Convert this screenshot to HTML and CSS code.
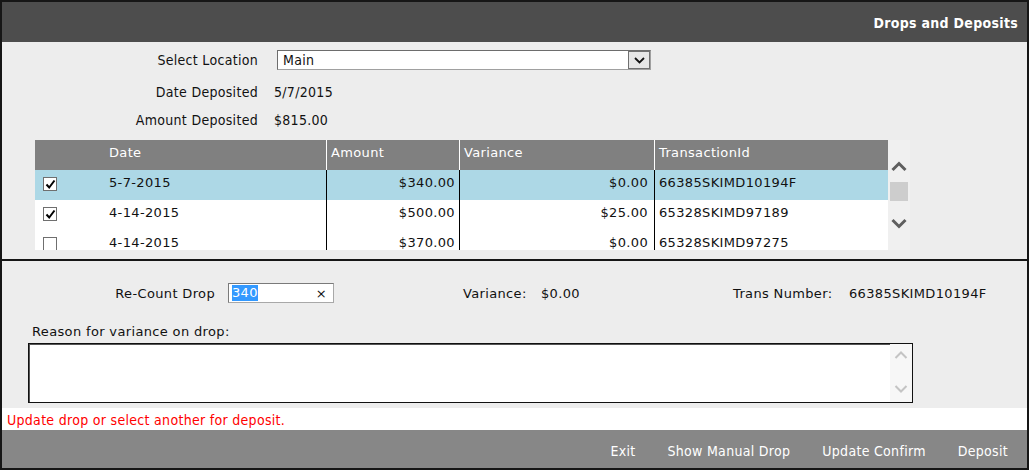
FILE: index.html
```html
<!DOCTYPE html>
<html>
<head>
<meta charset="utf-8">
<link rel="stylesheet" href="styles.css">
</head>
<body>
<div class="app">
  <header class="titlebar"><h1 class="title">Drops and Deposits</h1></header>
  <section class="top">
    <div class="form-grid">
      <div class="lbl">Select Location</div>
      <div class="select"><span class="select-text">Main</span><span class="select-btn"><svg width="11" height="7" viewBox="0 0 11 7"><path d="M1 1 L5.5 5.5 L10 1" fill="none" stroke="#111" stroke-width="1.8"/></svg></span></div>
      <div class="lbl">Date Deposited</div>
      <div class="val">5/7/2015</div>
      <div class="lbl">Amount Deposited</div>
      <div class="val">$815.00</div>
    </div>
    <div class="grid-wrap">
      <div class="grid">
        <div class="grow ghead">
          <div class="c c-chk"></div>
          <div class="c c-date">Date</div>
          <div class="c c-amt sep">Amount</div>
          <div class="c c-var sep">Variance</div>
          <div class="c c-txn sep">TransactionId</div>
        </div>
        <div class="grow sel">
          <div class="c c-chk"><span class="cb"><svg width="11" height="11" viewBox="0 0 11 11"><path d="M1.5 5.5 L4.2 8.5 L9.5 1.5" fill="none" stroke="#000" stroke-width="2"/></svg></span></div>
          <div class="c c-date">5-7-2015</div>
          <div class="c c-amt sep r">$340.00</div>
          <div class="c c-var sep r">$0.00</div>
          <div class="c c-txn sep">66385SKIMD10194F</div>
        </div>
        <div class="grow">
          <div class="c c-chk"><span class="cb"><svg width="11" height="11" viewBox="0 0 11 11"><path d="M1.5 5.5 L4.2 8.5 L9.5 1.5" fill="none" stroke="#000" stroke-width="2"/></svg></span></div>
          <div class="c c-date">4-14-2015</div>
          <div class="c c-amt sep r">$500.00</div>
          <div class="c c-var sep r">$25.00</div>
          <div class="c c-txn sep">65328SKIMD97189</div>
        </div>
        <div class="grow">
          <div class="c c-chk"><span class="cb"></span></div>
          <div class="c c-date">4-14-2015</div>
          <div class="c c-amt sep r">$370.00</div>
          <div class="c c-var sep r">$0.00</div>
          <div class="c c-txn sep">65328SKIMD97275</div>
        </div>
      </div>
      <div class="vscroll">
        <svg class="arrow-up" width="16" height="11" viewBox="0 0 16 11"><path d="M1.5 9 L8 2.5 L14.5 9" fill="none" stroke="#5f5f5f" stroke-width="3"/></svg>
        <div class="thumb"></div>
        <svg class="arrow-down" width="16" height="11" viewBox="0 0 16 11"><path d="M1.5 2 L8 8.5 L14.5 2" fill="none" stroke="#5f5f5f" stroke-width="3"/></svg>
      </div>
    </div>
  </section>
  <section class="bottom">
    <div class="recount-row">
      <div class="rc-lbl">Re-Count Drop</div>
      <div class="input"><span class="hl">340</span><span class="clear">×</span></div>
      <div class="v-lbl">Variance:</div>
      <div class="v-val">$0.00</div>
      <div class="t-lbl">Trans Number:</div>
      <div class="t-val">66385SKIMD10194F</div>
    </div>
    <div class="reason-lbl">Reason for variance on drop:</div>
    <div class="textarea">
      <div class="ta-scroll">
        <svg width="14" height="10" viewBox="0 0 14 10"><path d="M1.5 8 L7 2.5 L12.5 8" fill="none" stroke="#c4c4c4" stroke-width="2"/></svg>
        <svg width="14" height="10" viewBox="0 0 14 10"><path d="M1.5 2 L7 7.5 L12.5 2" fill="none" stroke="#c4c4c4" stroke-width="2"/></svg>
      </div>
    </div>
  </section>
  <div class="msg">Update drop or select another for deposit.</div>
  <footer class="actions">
    <span class="act">Exit</span>
    <span class="act">Show Manual Drop</span>
    <span class="act">Update Confirm</span>
    <span class="act">Deposit</span>
  </footer>
</div>
</body>
</html>
```
FILE: styles.css
```css
* { box-sizing: border-box; }
html, body { margin: 0; padding: 0; background: #fff; }
body { font-family: "DejaVu Sans Condensed", "Liberation Sans", sans-serif; font-size: 14px; letter-spacing: 0.3px; color: #111; }

.app {
  width: 1029px;
  height: 470px;
  border: 2px solid #161616;
  display: flex;
  flex-direction: column;
  background: #ededed;
}

.titlebar {
  height: 40px;
  background: #4d4d4d;
  display: flex;
  align-items: center;
  justify-content: flex-end;
  padding-right: 9px;
}
.title { margin: 0; font-size: 14px; font-weight: bold; color: #fff; position: relative; top: 1px; }

.top {
  padding: 8px 0 9px 0;
  border-bottom: 2px solid #161616;
}
.form-grid {
  display: grid;
  grid-template-columns: 256px 1fr;
  grid-template-rows: 32px 28px 20px;
  column-gap: 16px;
  align-items: start;
}
.lbl { text-align: right; line-height: 20px; }
.val { line-height: 20px; }
.form-grid .lbl:first-child { line-height: 21px; }
.select {
  margin-left: 3px;
  width: 374px;
  height: 20px;
  background: #fff;
  border: 1px solid #a0a0a0;
  border-top-color: #6d6d6d;
  border-left-color: #6d6d6d;
  display: flex;
  align-items: center;
  justify-content: space-between;
}
.select-text { padding-left: 5px; line-height: 18px; }
.select-btn {
  width: 22px; height: 18px;
  background: #e6e6e6;
  border: 1px solid #707070;
  display: flex; align-items: center; justify-content: center;
}

.grid-wrap {
  margin: 10px 0 0 33px;
  display: flex;
  height: 110px;
}
.grid {
  width: 853px;
  height: 110px;
  overflow: hidden;
  background: #fff;
  font-family: "DejaVu Sans", Verdana, sans-serif;
  font-size: 13px;
  letter-spacing: 0.35px;
}
.grow { display: flex; height: 30px; background: #fff; }
.grow.sel { background: #add8e6; }
.ghead { background: #808080; color: #fff; }
.c { line-height: 26px; padding: 0 4px; white-space: nowrap; }
.c-chk { width: 70px; padding: 7px 0 0 8px; line-height: normal; }
.c-date { width: 221px; }
.c-amt { width: 133px; }
.c-var { width: 195px; }
.c-txn { width: 234px; }
.sep { border-left: 1px solid #000; }
.ghead .sep { border-left: 1px solid #fff; }
.r { text-align: right; padding-right: 4px; }
.c-var.r { padding-right: 6px; }
.cb {
  display: flex;
  align-items: center;
  justify-content: center;
  width: 14px; height: 14px;
  background: #fff;
  border: 1px solid #6f6f6f;
}

.vscroll {
  width: 22px;
  height: 110px;
  background: #f0f0f0;
  display: flex;
  flex-direction: column;
  align-items: center;
}
.arrow-up { margin-top: 21px; }
.thumb { width: 18px; height: 19px; background: #cdcdcd; margin-top: 10px; }
.arrow-down { margin-top: 17px; }

.bottom {
  flex: 1;
  padding-top: 22px;
  font-family: "DejaVu Sans", Verdana, sans-serif;
  font-size: 13px;
  letter-spacing: 0.35px;
}
.recount-row { display: flex; align-items: center; height: 20px; }
.rc-lbl { width: 213px; text-align: right; }
.input {
  margin-left: 13px;
  width: 106px; height: 20px;
  background: #fff;
  border: 1px solid #a8a8a8;
  border-top-color: #7a7a7a;
  border-left-color: #7a7a7a;
  display: flex; align-items: center; justify-content: space-between;
  padding: 0 6px 0 3px;
}
.hl { background: #3399ff; color: #fff; line-height: 16px; }
.clear { font-size: 13px; color: #111; }
.v-lbl { margin-left: 129px; width: 78px; }
.v-val { width: 192px; }
.t-lbl { width: 116px; }
.reason-lbl { margin: 20px 0 0 30px; line-height: 18px; }
.textarea {
  margin: 2px 0 0 26px;
  width: 885px;
  height: 60px;
  background: #fff;
  border: 1px solid #111;
  box-shadow: inset 1px 1px 0 #555;
  display: flex;
  justify-content: flex-end;
}
.ta-scroll {
  width: 22px;
  background: #f7f7f7;
  display: flex;
  flex-direction: column;
  align-items: center;
  justify-content: space-between;
  padding: 6px 0 8px;
}

.msg {
  height: 22px;
  background: #fff;
  color: #ff0000;
  line-height: 24px;
  padding-left: 5px;
}
.actions {
  height: 38px;
  background: #878787;
  display: flex;
  justify-content: flex-end;
  align-items: center;
  gap: 32px;
  padding: 3px 19px 0 0;
  color: #fff;
}
.act { line-height: 20px; }
```
